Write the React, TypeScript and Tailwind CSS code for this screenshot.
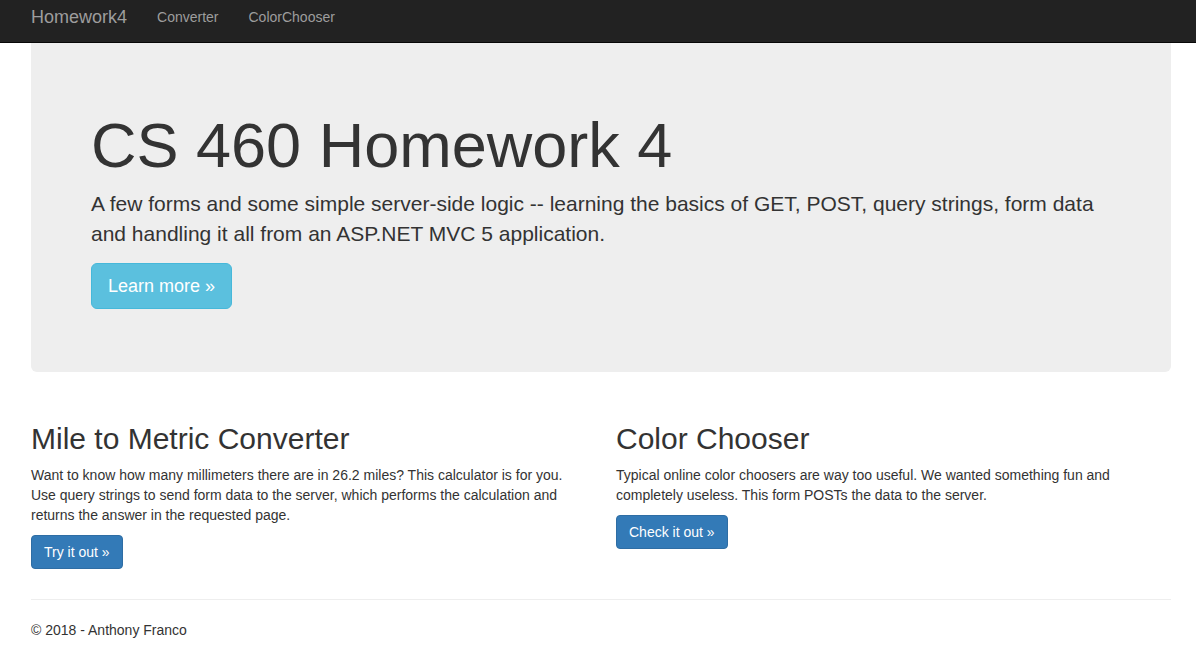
import React from "react";

export default function App() {
  const font = { fontFamily: '"Liberation Sans", Arial, Helvetica, sans-serif' };
  return (
    <div className="min-h-[647px] bg-white text-[#333] text-[14px] leading-[20px]" style={font}>
      <nav className="h-[43px] bg-[#222] border-b border-[#080808]">
        <div className="flex items-start pl-[31px] pt-[7px]">
          <a className="text-[18px] leading-[20px] text-[#9d9d9d] pr-[15px]">Homework4</a>
          <a className="text-[14px] leading-[20px] text-[#9d9d9d] px-[15px]">Converter</a>
          <a className="text-[14px] leading-[20px] text-[#9d9d9d] px-[15px]">ColorChooser</a>
        </div>
      </nav>
      <div className="ml-[31px] w-[1140px]">
        <div className="bg-[#eee] rounded-b-[6px] px-[60px] pt-[48px] pb-[48px] mb-[30px]">
          <h1 className="text-[63px] leading-[69px] mt-[20px] mb-[9px] font-normal">CS 460 Homework 4</h1>
          <p className="text-[21px] leading-[30px] font-light mb-[14px]">
            A few forms and some simple server-side logic -- learning the basics of GET, POST, query strings, form data and handling it all from an ASP.NET MVC 5 application.
          </p>
          <p className="mb-[15px]">
            <a className="inline-block bg-[#5bc0de] border border-[#46b8da] text-white text-[18px] leading-[24px] px-[16px] py-[10px] rounded-[6px]">
              Learn more »
            </a>
          </p>
        </div>
        <div className="grid grid-cols-2 gap-x-[30px]">
          <div>
            <h2 className="text-[30px] leading-[33px] mt-[20px] mb-[10px] font-normal">Mile to Metric Converter</h2>
            <p className="mb-[10px]">
              Want to know how many millimeters there are in 26.2 miles? This calculator is for you. Use query strings to send form data to the server, which performs the calculation and returns the answer in the requested page.
            </p>
            <p className="mb-[10px]">
              <a className="inline-block bg-[#337ab7] border border-[#2e6da4] text-white text-[14px] leading-[20px] px-[12px] py-[6px] rounded-[4px]">
                Try it out »
              </a>
            </p>
          </div>
          <div>
            <h2 className="text-[30px] leading-[33px] mt-[20px] mb-[10px] font-normal">Color Chooser</h2>
            <p className="mb-[10px]">
              Typical online color choosers are way too useful. We wanted something fun and completely useless. This form POSTs the data to the server.
            </p>
            <p className="mb-[10px]">
              <a className="inline-block bg-[#337ab7] border border-[#2e6da4] text-white text-[14px] leading-[20px] px-[12px] py-[6px] rounded-[4px]">
                Check it out »
              </a>
            </p>
          </div>
        </div>
        <hr className="mt-[20px] mb-[20px] border-0 border-t border-[#eee]" />
        <footer>
          <p className="mb-[10px]">© 2018 - Anthony Franco</p>
        </footer>
      </div>
    </div>
  );
}
